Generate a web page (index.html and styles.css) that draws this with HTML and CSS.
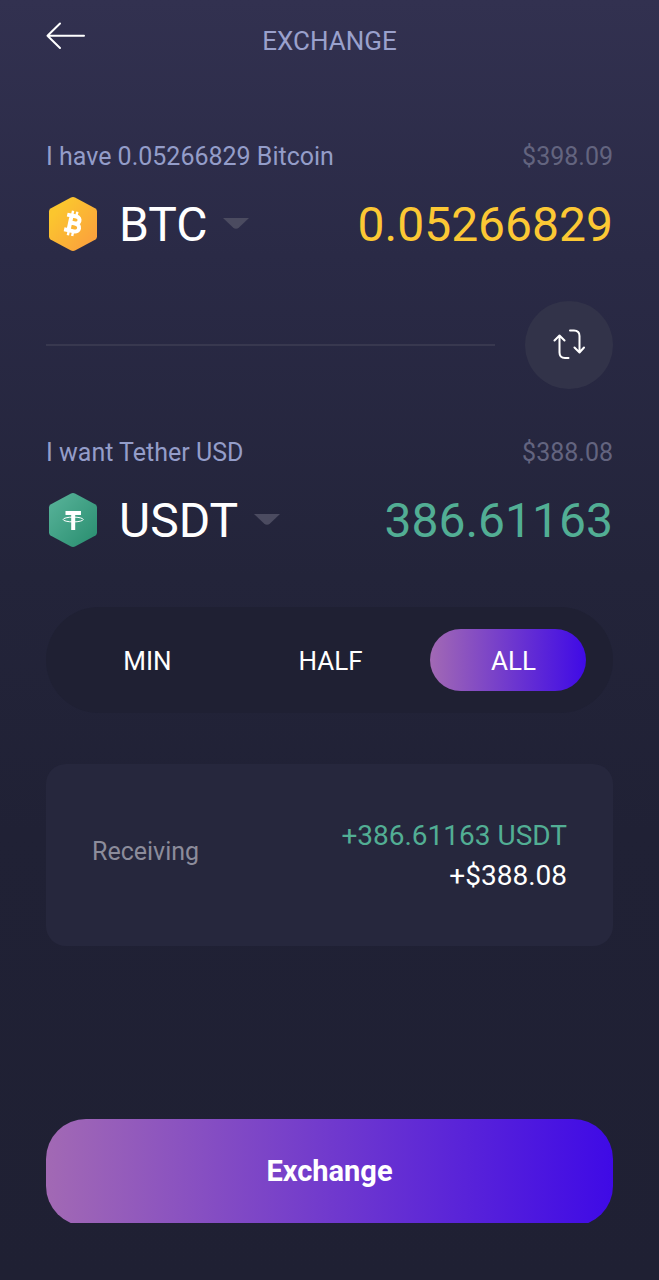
FILE: index.html
```
<!DOCTYPE html>
<html lang="en">
<head>
<meta charset="utf-8">
<meta name="viewport" content="width=device-width, initial-scale=1">
<title>Exchange</title>
<link rel="stylesheet" href="styles.css">
</head>
<body>
<form class="page">

<header class="topbar">
<button type="button" class="back" aria-label="Back">
<svg width="40" height="28" viewBox="0 0 40 28"><path d="M14 1.500L1.500 13.700L14 26M1.500 13.700H38"/></svg>
</button>
<h1>EXCHANGE</h1>
</header>

<section class="coin">
<div class="coinlabel">
<label for="havecoin">I have 0.05266829 Bitcoin</label>
<span class="fiat">$398.09</span>
</div>
<div class="coinrow">
<svg class="coinicon" width="54" height="56" viewBox="0 0 54 56">
<defs>
<linearGradient id="gold" x1="0" y1="0" x2="1" y2="1"><stop offset="0.200" stop-color="#fbc62e"/><stop offset="0.850" stop-color="#fba33c"/></linearGradient>
</defs>
<path fill="url(#gold)" d="M24.500 0.700Q27 -0.500 29.500 0.700L49.500 11.600Q51 12.600 51 14.500V39.500Q51 41.400 49.500 42.400L29.500 53.300Q27 54.600 24.500 53.300L4.500 42.400Q3 41.400 3 39.500V14.500Q3 12.600 4.500 11.600Z"/>
<g transform="translate(27 26.500) rotate(12)" fill="none" stroke="#fff">
<path stroke-width="4" stroke-linejoin="round" d="M-3 -7.500V7.500M-7.500 -7.500H2C7 -7.500 7 -0.500 2 -0.500H-3M2 -0.500C8.500 -0.500 8.500 7.500 2.500 7.500H-7.500"/>
<path stroke-width="2.400" d="M-2.600 -12.500V-8M1.800 -12.500V-8M-2.600 8V12.500M1.800 8V12.500"/>
</g>
</svg>
<span class="picker">
<select id="havecoin"><option>BTC</option></select>
<svg class="caret" width="26" height="12" viewBox="0 0 26 12"><path d="M0 0H26L16 9.500Q13 12 10 9.500Z"/></svg>
</span>
<input class="amount have" type="text" value="0.05266829" aria-label="Bitcoin amount">
</div>
</section>

<div class="swaprow">
<hr>
<button type="button" class="swap" aria-label="Swap coins">
<svg width="32" height="32" viewBox="0 0 32 32"><path d="M1.500 11.500L6.500 6.500L11.500 11.500M6.500 7V23.500Q6.500 29 12 29H15.500M17 1.500H21Q26.500 1.500 26.500 7V23M21.500 18.500L26.500 23.500L31 18.500"/></svg>
</button>
</div>

<section class="coin">
<div class="coinlabel">
<label for="wantcoin">I want Tether USD</label>
<span class="fiat">$388.08</span>
</div>
<div class="coinrow">
<svg class="coinicon" width="54" height="56" viewBox="0 0 54 56">
<defs>
<linearGradient id="green" x1="0" y1="0" x2="1" y2="1"><stop offset="0.150" stop-color="#52ae94"/><stop offset="0.900" stop-color="#2d9173"/></linearGradient>
</defs>
<path fill="url(#green)" d="M24.500 0.700Q27 -0.500 29.500 0.700L49.500 11.600Q51 12.600 51 14.500V39.500Q51 41.400 49.500 42.400L29.500 53.300Q27 54.600 24.500 53.300L4.500 42.400Q3 41.400 3 39.500V14.500Q3 12.600 4.500 11.600Z"/>
<path stroke="#fff" stroke-width="4" fill="none" d="M19.500 20H35M27.200 20V37"/>
<ellipse cx="27.200" cy="26.500" rx="10" ry="2.400" stroke="#fff" fill="none"/>
</svg>
<span class="picker">
<select id="wantcoin"><option>USDT</option></select>
<svg class="caret" width="26" height="12" viewBox="0 0 26 12"><path d="M0 0H26L16 9.500Q13 12 10 9.500Z"/></svg>
</span>
<input class="amount want" type="text" value="386.61163" aria-label="Tether amount">
</div>
</section>

<div class="share" role="radiogroup" aria-label="Amount to exchange">
<label><input type="radio" name="share" value="min"><span>MIN</span></label>
<label><input type="radio" name="share" value="half"><span>HALF</span></label>
<label><input type="radio" name="share" value="all" checked><span>ALL</span></label>
</div>

<section class="receiving">
<span class="receivinglabel">Receiving</span>
<div class="total">
<div class="totalcoin">+386.61163 USDT</div>
<div>+$388.08</div>
</div>
</section>

<button type="submit" class="submit"><span>Exchange</span></button>

</form>
</body>
</html>
```
FILE: styles.css
```
*{
box-sizing:border-box;
}

html{
min-height:100%;
background:linear-gradient(#323150 0%, #2a2a46 20%, #23243a 45%, #202135 65%, #1f2033 100%);
}

body{
margin:0;
color:#ffffff;
font-family:Roboto, sans-serif;
font-size:26px;
line-height:30px;
}

button, input, select{
margin:0;
padding:0;
border:0;
background:none;
color:inherit;
font:inherit;
}

.page{
padding:22px 46px 56px;
}

/* top bar */
.topbar{
display:grid;
grid-template-columns:1fr auto 1fr;
align-items:start;
}

.back{
justify-self:start;
height:28px;
}

.back svg, .swap svg{
display:block;
fill:none;
stroke:#ffffff;
stroke-width:2;
stroke-linecap:round;
stroke-linejoin:round;
}

h1{
margin:4px 0 0;
color:#9aa1cc;
font-size:26px;
font-weight:normal;
}

/* coins */
.coin{
margin-top:86px;
}

.coinlabel{
display:flex;
justify-content:space-between;
color:#949dc9;
font-size:25px;
}

.fiat{
color:#63647f;
}

.coinrow{
display:flex;
align-items:center;
height:56px;
margin-top:25px;
font-size:48px;
line-height:56px;
}

.coinicon{
flex:none;
}

.picker{
position:relative;
flex:none;
margin-left:19px;
}

.picker select{
display:block;
height:56px;
padding-right:41px;
appearance:none;
}

.caret{
position:absolute;
right:0;
top:21px;
fill:#4b4b60;
pointer-events:none;
}

.amount{
flex:1;
min-width:0;
height:56px;
text-align:right;
}

.have{
color:#fcc834;
}

.want{
color:#52ae94;
}

/* swap */
.swaprow{
display:flex;
align-items:center;
gap:30px;
margin-top:48px;
}

.swaprow hr{
flex:1;
margin:0;
border:0;
border-top:2px solid #38384f;
}

.swap{
display:grid;
place-items:center;
width:88px;
height:88px;
border-radius:50%;
background:#323349;
}

.swaprow + .coin{
margin-top:49px;
}

/* min / half / all */
.share{
display:flex;
margin-top:58px;
padding:22px 8px 22px 10px;
border-radius:54px;
background:#1f2033;
}

.share label{
position:relative;
flex:1;
height:62px;
line-height:64px;
text-align:center;
}

.share input{
position:absolute;
inset:0 19px 0 8px;
border-radius:31px;
appearance:none;
}

.share input:checked{
background:linear-gradient(90deg, #a269b4, #3f0ae6);
}

.share span{
position:relative;
}

/* receiving */
.receiving{
display:flex;
align-items:center;
justify-content:space-between;
margin-top:51px;
padding:52px 46px 50px;
border-radius:20px;
background:#26273d;
}

.receivinglabel{
padding-bottom:8px;
color:#8c8c9b;
font-size:25px;
}

.total{
font-size:28px;
line-height:40px;
text-align:right;
}

.totalcoin{
color:#52ae94;
}

/* the gradient runs a little past the bottom edge */
.submit{
display:block;
width:100%;
height:104px;
margin-top:173px;
overflow:hidden;
font-size:29px;
font-weight:bold;
}

.submit span{
display:block;
height:107px;
border-radius:40px;
background:linear-gradient(90deg, #a269b4, #3f0ae6);
line-height:104px;
}
```
